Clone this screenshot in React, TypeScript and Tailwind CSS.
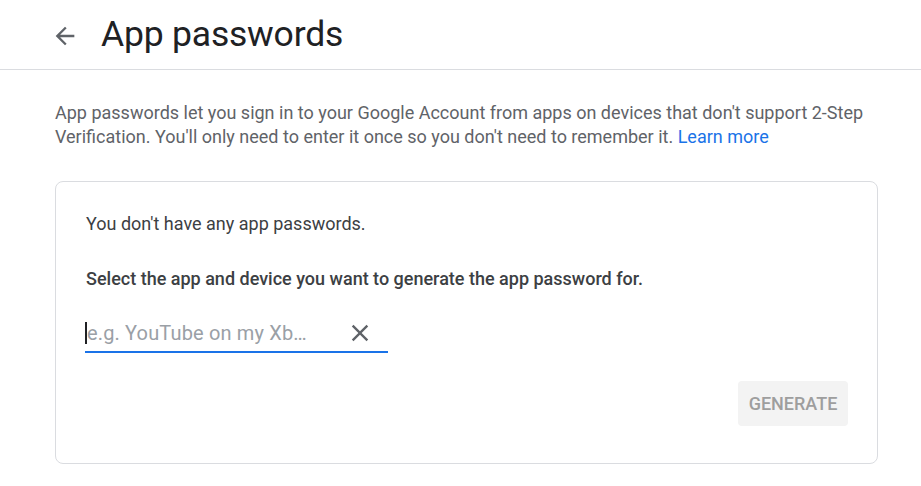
function BackArrow() {
  return (
    <svg viewBox="0 0 24 24" className="h-7 w-7" fill="#5f6368">
      <path d="M20 11H7.83l5.59-5.59L12 4l-8 8 8 8 1.41-1.41L7.83 13H20v-2z" />
    </svg>
  )
}

function CloseIcon() {
  return (
    <svg viewBox="0 0 24 24" className="h-7 w-7" fill="#5f6368">
      <path d="M19 6.41 17.59 5 12 10.59 6.41 5 5 6.41 10.59 12 5 17.59 6.41 19 12 13.41 17.59 19 19 17.59 13.41 12z" />
    </svg>
  )
}

export default function App() {
  return (
    <div className="min-h-[486px] w-full bg-white font-['Roboto',sans-serif]">
      {/* Header */}
      <header className="flex h-[70px] items-center border-b border-[#dadce0] pl-[51px]">
        <button className="mt-[2px] flex h-7 w-7 items-center justify-center">
          <BackArrow />
        </button>
        <h1 className="ml-[22px] text-[35.5px] font-normal leading-none text-[#202124] tracking-[-0.2px]">
          App passwords
        </h1>
      </header>

      <main className="ml-[55px] w-[823px] pt-[31px]">
        <p className="text-[18px] leading-6 text-[#5f6368]">
          <span className="block whitespace-nowrap">
            App passwords let you sign in to your Google Account from apps on devices that don't support 2-Step
          </span>
          <span className="block whitespace-nowrap">
            Verification. You'll only need to enter it once so you don't need to remember it.{' '}
            <a className="text-[#1a73e8]">Learn more</a>
          </span>
        </p>

        <section className="mt-8 rounded-lg border border-[#dadce0] pb-[37px] pl-[30px] pr-[29px] pt-[30px]">
          <p className="text-[18px] leading-6 text-[#3c4043]">You don't have any app passwords.</p>
          <p className="mt-[31px] text-[18px] font-medium leading-6 text-[#3c4043]">
            Select the app and device you want to generate the app password for.
          </p>

          <div className="mt-[22px] -ml-px flex h-[40px] w-[303px] items-center border-b-2 border-[#1a73e8]">
            <div className="flex flex-1 items-center pt-[2px]">
              <span className="h-[22px] w-[2px] bg-[#202124]" />
              <span className="text-[20px] leading-none tracking-[0.15px] text-[#9aa0a6]">e.g. YouTube on my Xb…</span>
            </div>
            <span className="mr-[14px] flex pt-[2px]">
              <CloseIcon />
            </span>
          </div>

          <div className="mt-[28px] flex justify-end">
            <button className="h-[45px] w-[110px] rounded bg-[#f3f3f3] text-[18px] font-medium text-[#9e9e9e]">
              GENERATE
            </button>
          </div>
        </section>
      </main>
    </div>
  )
}
